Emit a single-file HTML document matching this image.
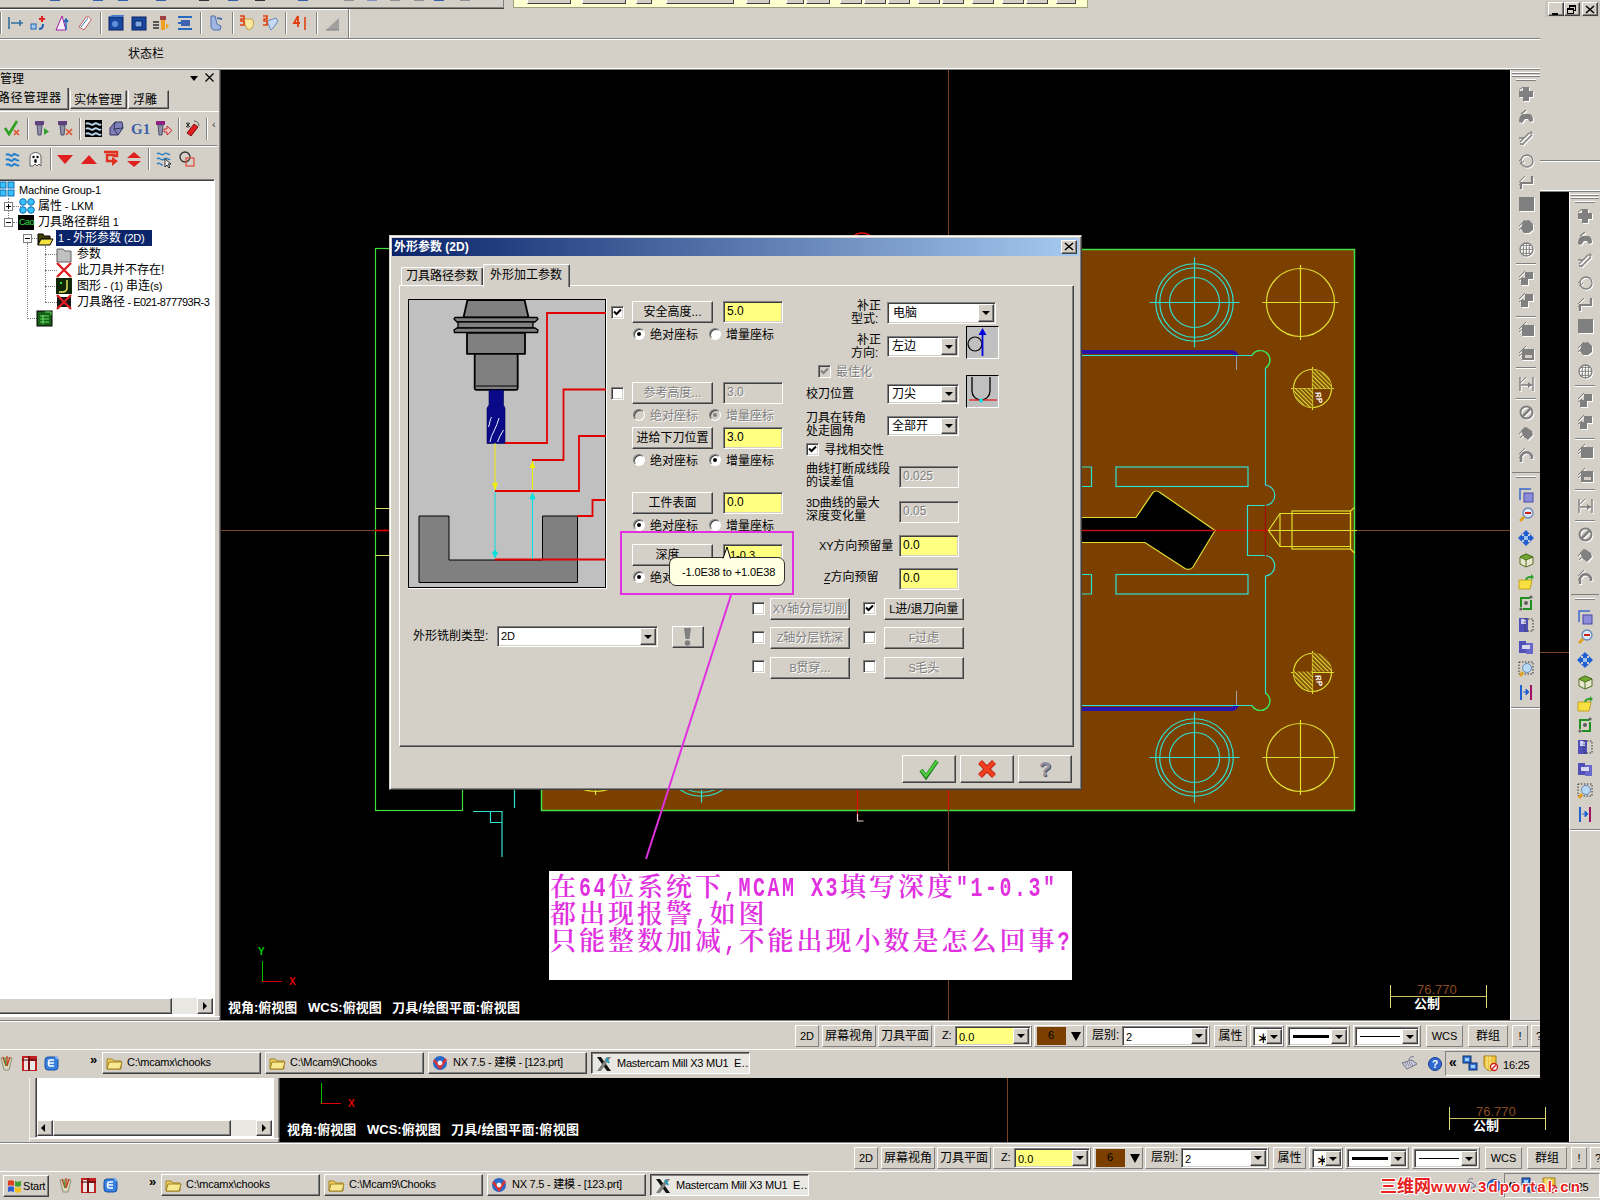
<!DOCTYPE html><html lang="zh-CN"><head><meta charset="utf-8"><title>Mastercam X3</title><style>
*{box-sizing:border-box;margin:0;padding:0}
html,body{width:1600px;height:1200px;overflow:hidden;background:#d4d0c8}
body{position:relative;font-family:"Liberation Sans","Noto Sans CJK SC",sans-serif;font-size:12px;color:#000;line-height:14px}
.a{position:absolute}
.shot{position:absolute;background:#d4d0c8}
.t{position:absolute;white-space:nowrap;font-size:12px;line-height:14px}
.lat{font-size:11px;letter-spacing:-.2px}
.l{font-size:11px;letter-spacing:-.2px}
.btn{position:absolute;background:#d4d0c8;border:1px solid;border-color:#fff #404040 #404040 #fff;box-shadow:inset -1px -1px 0 #808080,inset 1px 1px 0 #d4d0c8;text-align:center;white-space:nowrap;font-size:12px}
.btn.dis{color:#808080;text-shadow:1px 1px 0 #fff}
.sunk{position:absolute;border:1px solid;border-color:#808080 #fff #fff #808080;box-shadow:inset 1px 1px 0 #404040,inset -1px -1px 0 #d4d0c8;background:#fff;white-space:nowrap;font-size:11px;padding:3px 0 0 3px;line-height:13px}
.sunk.y{background:#ffff80}
.sunk.dis{background:#d4d0c8;color:#808080;text-shadow:1px 1px 0 #fff}
.flat{position:absolute;border:1px solid;border-color:#fff #808080 #808080 #fff;text-align:center;white-space:nowrap;font-size:12px;line-height:20px}
.cb{position:absolute;width:13px;height:13px;background:#fff;border:1px solid;border-color:#808080 #fff #fff #808080;box-shadow:inset 1px 1px 0 #404040,inset -1px -1px 0 #d4d0c8}
.rd{position:absolute;width:12px;height:12px;border-radius:50%;background:#fff;border:1px solid;border-color:#808080 #fff #fff #808080;box-shadow:inset 1px 1px 0 #404040}
.rd.on::after{content:"";position:absolute;left:3px;top:3px;width:4px;height:4px;border-radius:50%;background:#000}
.rd.gr{background:#d4d0c8}
.rd.gr.on::after{background:#808080}
.dd{position:absolute;width:16px;background:#d4d0c8;border:1px solid;border-color:#fff #404040 #404040 #fff;box-shadow:inset -1px -1px 0 #808080}
.dd::after{content:"";position:absolute;left:3px;top:50%;margin-top:-2px;border:4px solid transparent;border-top:4px solid #000;border-bottom:0}
.hl{position:absolute;height:1px}
.vl{position:absolute;width:1px}
.dis{color:#808080;text-shadow:1px 1px 0 #fff}
.tb{position:absolute;background:#d4d0c8;border:1px solid;border-color:#fff #404040 #404040 #fff;box-shadow:inset -1px -1px 0 #808080;white-space:nowrap;font-size:11px;letter-spacing:-.25px;line-height:19px;padding-left:24px;overflow:hidden}
.vw{color:#fff;font-weight:bold;font-size:13px;letter-spacing:0}
svg{position:absolute;overflow:visible}
.kl{display:inline-block;font-family:'Liberation Mono',monospace;font-weight:bold;font-size:20px;letter-spacing:2.5px;transform:scaleY(1.35);transform-origin:0 72%}
</style></head><body><div class="shot" style="left:59px;top:122px;width:1541px;height:1078px"><div class="a" style="left:1486px;top:-121px;width:60px;height:16px;background:#c8c4bc;"></div><div class="btn " style="left:1489px;top:-120px;width:16px;height:14px;line-height:12px;"></div><div class="a" style="left:1493px;top:-109px;width:6px;height:2px;background:#000;"></div><div class="btn " style="left:1505px;top:-120px;width:16px;height:14px;line-height:12px;"></div><div class="a" style="left:1510px;top:-117px;width:7px;height:6px;border:1px solid #000;border-top-width:2px"></div><div class="a" style="left:1508px;top:-114px;width:7px;height:6px;border:1px solid #000;border-top-width:2px;background:#d4d0c8"></div><div class="btn " style="left:1523px;top:-120px;width:16px;height:14px;line-height:12px;"></div><svg style="left:1527px;top:-116px" width="8" height="8" viewBox="0 0 8 8"><path d="M0 0 L8 7 M8 0 L0 7" stroke="#000" stroke-width="1.6"/></svg><div class="hl" style="left:-60px;top:38px;width:1700px;background:#808080"></div><div class="hl" style="left:-60px;top:39px;width:1700px;background:#fff"></div><div class="hl" style="left:-60px;top:68px;width:1700px;background:#fff"></div><div class="hl" style="left:-60px;top:69px;width:1700px;background:#808080"></div><div class="a" style="left:221px;top:70px;width:1289px;height:950px;background:#000;"></div><div class="hl" style="left:221px;top:530px;width:1289px;background:#7a4524"></div><div class="vl" style="left:948px;top:70px;height:950px;background:#7a4524"></div><div class="vl" style="left:262px;top:961px;height:21px;background:#00c000"></div><div class="hl" style="left:262px;top:981px;width:20px;background:#e00000"></div><div class="t" style="left:258px;top:945px;color:#00d000;font-size:10px;font-weight:bold">Y</div><div class="t" style="left:289px;top:975px;color:#e00000;font-size:10px;font-weight:bold">X</div><div class="t vw" style="left:228px;top:1001px;">视角:俯视图</div><div class="t vw" style="left:308px;top:1001px;">WCS:俯视图</div><div class="t vw" style="left:392px;top:1001px;letter-spacing:.3px">刀具/绘图平面:俯视图</div><div class="t" style="left:1417px;top:983px;color:#8a4a20;font-size:13px">76.770</div><div class="hl" style="left:1390px;top:996px;width:96px;background:#c8c060"></div><div class="vl" style="left:1390px;top:985px;height:23px;background:#e0e080"></div><div class="vl" style="left:1486px;top:985px;height:23px;background:#e0e080"></div><div class="t vw" style="left:1414px;top:997px;">公制</div><div class="a" style="left:-30px;top:70px;width:251px;height:951px;background:#d4d0c8;"></div><div class="vl" style="left:-30px;top:70px;height:951px;background:#f4f2ee"></div><div class="vl" style="left:219px;top:70px;height:951px;background:#808080"></div><div class="vl" style="left:220px;top:70px;height:951px;background:#404040"></div><div class="a" style="left:-24px;top:179px;width:239px;height:837px;background:#fff;border:1px solid;border-color:#808080 #fff #fff #808080;box-shadow:inset 1px 1px 0 #404040"></div><div class="a" style="left:-22px;top:998px;width:235px;height:16px;background:#e9e7e2;"></div><div class="btn " style="left:-22px;top:998px;width:16px;height:16px;line-height:14px;"></div><div class="a" style="left:-18px;top:1002px;border:4px solid transparent;border-right:4px solid #000;border-left:0"></div><div class="btn " style="left:-6px;top:998px;width:178px;height:16px;line-height:14px;"></div><div class="btn " style="left:197px;top:998px;width:16px;height:16px;line-height:14px;"></div><div class="a" style="left:203px;top:1002px;border:4px solid transparent;border-left:4px solid #000;border-right:0"></div><div class="hl" style="left:-30px;top:1016px;width:250px;background:#fff"></div><div class="a" style="left:1510px;top:70px;width:31px;height:951px;background:#d4d0c8;"></div><div class="vl" style="left:1510px;top:70px;height:951px;background:#fff"></div><div class="hl" style="left:1512px;top:72px;width:28px;background:#fff"></div><div class="hl" style="left:1512px;top:73px;width:28px;background:#808080"></div><div class="hl" style="left:1512px;top:75px;width:28px;background:#fff"></div><div class="hl" style="left:1512px;top:76px;width:28px;background:#808080"></div><div class="hl" style="left:1516px;top:79px;width:20px;background:#fff"></div><div class="hl" style="left:1516px;top:80px;width:20px;background:#808080"></div><div class="hl" style="left:1516px;top:263px;width:20px;background:#808080"></div><div class="hl" style="left:1516px;top:264px;width:20px;background:#fff"></div><div class="hl" style="left:1516px;top:316px;width:20px;background:#808080"></div><div class="hl" style="left:1516px;top:317px;width:20px;background:#fff"></div><div class="hl" style="left:1516px;top:367px;width:20px;background:#808080"></div><div class="hl" style="left:1516px;top:368px;width:20px;background:#fff"></div><div class="hl" style="left:1516px;top:398px;width:20px;background:#808080"></div><div class="hl" style="left:1516px;top:399px;width:20px;background:#fff"></div><svg style="left:1518px;top:86px" width="17" height="17" viewBox="0 0 17 17"><g style="filter:drop-shadow(1px 1px 0 #fff)"><path d="M5 1h6v4h4v6h-4v4H5v-4H1V5h4z" fill="#808080"/><path d="M1 4l4-3" stroke="#808080"/></g></svg><svg style="left:1518px;top:109px" width="17" height="17" viewBox="0 0 17 17"><g style="filter:drop-shadow(1px 1px 0 #fff)"><path d="M1 13c0-5 2-8 5-8h5c3 0 4 3 4 7l-3 1-2-3H7l-3 4z" fill="#808080"/><path d="M3 5l5-4" stroke="#808080" stroke-width="1.5"/></g></svg><svg style="left:1518px;top:130px" width="17" height="17" viewBox="0 0 17 17"><g style="filter:drop-shadow(1px 1px 0 #fff)"><path d="M2 12L11 3M4 15L14 5M1 8h5M2 14h4" stroke="#808080" stroke-width="1.3" fill="none"/><path d="M13 1v4M11 3h4" stroke="#808080"/></g></svg><svg style="left:1518px;top:152px" width="17" height="17" viewBox="0 0 17 17"><g style="filter:drop-shadow(1px 1px 0 #fff)"><circle cx="9" cy="9" r="6" fill="none" stroke="#808080" stroke-width="1.3"/><path d="M1 9l6-6M2 12l4-3" stroke="#808080"/></g></svg><svg style="left:1518px;top:174px" width="17" height="17" viewBox="0 0 17 17"><g style="filter:drop-shadow(1px 1px 0 #fff)"><path d="M3 15V9h11V2" fill="none" stroke="#808080" stroke-width="2.2"/><path d="M1 8l6-6M1 11l4-3" stroke="#808080"/></g></svg><svg style="left:1518px;top:196px" width="17" height="17" viewBox="0 0 17 17"><g style="filter:drop-shadow(1px 1px 0 #fff)"><rect x="1" y="1" width="15" height="14" fill="#808080"/></g></svg><svg style="left:1518px;top:218px" width="17" height="17" viewBox="0 0 17 17"><g style="filter:drop-shadow(1px 1px 0 #fff)"><path d="M5 3l6-1 4 4v6l-4 3H6l-3-4z" fill="#808080"/><path d="M1 8l6-6M1 12l4-4" stroke="#808080"/></g></svg><svg style="left:1518px;top:241px" width="17" height="17" viewBox="0 0 17 17"><g style="filter:drop-shadow(1px 1px 0 #fff)"><circle cx="8.5" cy="8.5" r="6.5" fill="none" stroke="#808080" stroke-width="1.3"/><path d="M2 8.5h13M8.5 2v13M4 4.5h9M4 12.5h9M5.5 3v11M11.5 3v11" stroke="#808080" stroke-width=".8"/></g></svg><svg style="left:1518px;top:270px" width="17" height="17" viewBox="0 0 17 17"><g style="filter:drop-shadow(1px 1px 0 #fff)"><rect x="7" y="2" width="8" height="7" fill="#808080"/><rect x="3" y="8" width="7" height="7" fill="#808080"/><path d="M1 7l6-6M1 10l4-3" stroke="#808080"/></g></svg><svg style="left:1518px;top:292px" width="17" height="17" viewBox="0 0 17 17"><g style="filter:drop-shadow(1px 1px 0 #fff)"><rect x="7" y="2" width="8" height="7" fill="#808080"/><rect x="3" y="8" width="7" height="7" fill="#808080"/><path d="M1 7l6-6M1 10l4-3" stroke="#808080"/></g></svg><svg style="left:1518px;top:321px" width="17" height="17" viewBox="0 0 17 17"><g style="filter:drop-shadow(1px 1px 0 #fff)"><rect x="4" y="4" width="12" height="11" fill="#808080"/><path d="M1 8l7-7M1 11l3-3" stroke="#808080"/></g></svg><svg style="left:1518px;top:345px" width="17" height="17" viewBox="0 0 17 17"><g style="filter:drop-shadow(1px 1px 0 #fff)"><rect x="4" y="4" width="12" height="11" fill="#808080"/><rect x="7" y="10" width="7" height="3" fill="#d4d0c8"/><path d="M1 8l7-7M1 11l3-3" stroke="#808080"/></g></svg><svg style="left:1518px;top:375px" width="17" height="17" viewBox="0 0 17 17"><g style="filter:drop-shadow(1px 1px 0 #fff)"><path d="M2 2v14M15 2v14M3 10h11" stroke="#808080" stroke-width="1.4"/><path d="M10 7l4 3-4 3z" fill="#808080"/><path d="M2 8l6-6" stroke="#808080"/></g></svg><svg style="left:1518px;top:404px" width="17" height="17" viewBox="0 0 17 17"><g style="filter:drop-shadow(1px 1px 0 #fff)"><circle cx="8.5" cy="8.5" r="6" fill="none" stroke="#808080" stroke-width="2"/><path d="M4 13L13 4" stroke="#808080" stroke-width="2.5"/></g></svg><svg style="left:1518px;top:425px" width="17" height="17" viewBox="0 0 17 17"><g style="filter:drop-shadow(1px 1px 0 #fff)"><path d="M3 6l5-4 6 4 1 4-5 5-4-3z" fill="#808080"/><path d="M1 9l6-7M2 13l4-4" stroke="#808080"/></g></svg><svg style="left:1518px;top:447px" width="17" height="17" viewBox="0 0 17 17"><g style="filter:drop-shadow(1px 1px 0 #fff)"><path d="M3 15V9c3-5 8-5 11 0v3" fill="none" stroke="#808080" stroke-width="2.5"/><path d="M1 7l6-6M1 11l4-4" stroke="#808080"/></g></svg><div class="hl" style="left:1512px;top:472px;width:28px;background:#808080"></div><div class="hl" style="left:1516px;top:476px;width:20px;background:#fff"></div><div class="hl" style="left:1516px;top:477px;width:20px;background:#808080"></div><svg style="left:1518px;top:487px" width="17" height="17" viewBox="0 0 17 17"><rect x="6" y="6" width="9" height="9" fill="#8c8cd8" stroke="#4848a8"/><path d="M2 13V2h11" fill="none" stroke="#3868c8" stroke-width="1.5"/></svg><svg style="left:1518px;top:507px" width="17" height="17" viewBox="0 0 17 17"><circle cx="10" cy="6" r="5" fill="#d8e8f8" stroke="#6888b8" stroke-width="1.3"/><rect x="7" y="5" width="6" height="2" fill="#d02020"/><path d="M6 10l-4 4" stroke="#e0a020" stroke-width="3"/></svg><svg style="left:1518px;top:530px" width="17" height="17" viewBox="0 0 17 17"><path d="M8 0l4 4H10v2h2V4l4 4-4 4v-2h-2v2h2l-4 4-4-4h2v-2H4v2L0 8l4-4v2h2V4H4z" fill="#2060d0"/><rect x="6" y="6" width="4" height="4" fill="#a0c0f0"/></svg><svg style="left:1518px;top:552px" width="17" height="17" viewBox="0 0 17 17"><path d="M2 5l6-3 7 3v7l-7 3-6-3z" fill="#e8e8d0" stroke="#507020"/><path d="M2 5l6-3 7 3-7 3z" fill="#70a830" stroke="#507020"/><path d="M8 8v7" stroke="#507020"/></svg><svg style="left:1518px;top:574px" width="17" height="17" viewBox="0 0 17 17"><path d="M1 6h13l-2 9H1z" fill="#f8e040" stroke="#c0a020"/><path d="M7 6c1-4 4-4 6-4V0l3 3-3 3V4c-2 0-3 0-4 2z" fill="#30a030"/></svg><svg style="left:1518px;top:595px" width="17" height="17" viewBox="0 0 17 17"><path d="M3 12V3h9M13 5v9H5" fill="none" stroke="#209020" stroke-width="2"/><circle cx="8" cy="8" r="2" fill="#606060"/><circle cx="13" cy="2" r="1.6" fill="#606060"/><circle cx="3" cy="14" r="1.6" fill="#606060"/></svg><svg style="left:1518px;top:617px" width="17" height="17" viewBox="0 0 17 17"><path d="M1 1h9v14H1z" fill="#5050b8"/><rect x="3" y="2" width="5" height="5" fill="#d0d0f0"/><rect x="7" y="2" width="8" height="12" fill="none" stroke="#303030" stroke-dasharray="1.5 1.5"/></svg><svg style="left:1518px;top:639px" width="17" height="17" viewBox="0 0 17 17"><path d="M1 2h7v12H1z" fill="#5050b8"/><path d="M8 4h7v11H8z" fill="#6868c8"/><rect x="4" y="6" width="8" height="4" fill="#d8d8f0"/></svg><svg style="left:1518px;top:661px" width="17" height="17" viewBox="0 0 17 17"><rect x="1" y="1" width="14" height="12" fill="none" stroke="#303030" stroke-dasharray="1.5 1.5"/><circle cx="9" cy="7" r="4.5" fill="#b8d8f8" stroke="#6888b8"/><path d="M5 11l-3 4" stroke="#e0a020" stroke-width="3"/></svg><svg style="left:1518px;top:684px" width="17" height="17" viewBox="0 0 17 17"><path d="M3 1v15" stroke="#2060d0" stroke-width="2"/><path d="M13 1v15" stroke="#a01060" stroke-width="2"/><path d="M5 8h4M8 5l3 3-3 3z" stroke="#2060d0" fill="#2060d0"/></svg><div class="hl" style="left:1511px;top:707px;width:30px;background:#808080"></div><div class="hl" style="left:1511px;top:708px;width:30px;background:#fff"></div><div class="hl" style="left:-60px;top:1020px;width:1700px;background:#808080"></div><div class="hl" style="left:-60px;top:1021px;width:1700px;background:#fff"></div><div class="flat" style="left:795px;top:1025px;width:24px;height:22px;font-size:11px">2D</div><div class="flat" style="left:822px;top:1025px;width:54px;height:22px;">屏幕视角</div><div class="flat" style="left:878px;top:1025px;width:54px;height:22px;">刀具平面</div><div class="flat" style="left:934px;top:1025px;width:98px;height:22px;"></div><div class="t lat" style="left:942px;top:1028px;">Z:</div><div class="sunk y" style="left:955px;top:1026px;width:76px;height:20px;font-size:11px;padding-top:4px">0.0</div><div class="dd" style="left:1013px;top:1028px;height:16px"></div><div class="flat" style="left:1034px;top:1025px;width:50px;height:22px;"></div><div class="a" style="left:1037px;top:1027px;width:29px;height:18px;background:#7b3f00;text-align:center;font-size:11px;line-height:16px"></div><div class="t lat" style="left:1048px;top:1028px;">6</div><div class="a" style="left:1071px;top:1032px;border:5px solid transparent;border-top:9px solid #000;border-bottom:0"></div><div class="flat" style="left:1086px;top:1025px;width:124px;height:22px;"></div><div class="t" style="left:1092px;top:1028px;">层别:</div><div class="sunk " style="left:1122px;top:1026px;width:87px;height:20px;font-size:11px;padding-top:4px">2</div><div class="dd" style="left:1191px;top:1028px;height:16px"></div><div class="flat" style="left:1214px;top:1025px;width:33px;height:22px;">属性</div><div class="flat" style="left:1250px;top:1025px;width:34px;height:22px;"></div><div class="sunk " style="left:1253px;top:1027px;width:30px;height:19px;"></div><div class="t" style="left:1257px;top:1031px;font-size:15px">∗</div><div class="dd" style="left:1266px;top:1029px;height:15px"></div><div class="flat" style="left:1286px;top:1025px;width:64px;height:22px;"></div><div class="sunk " style="left:1288px;top:1027px;width:60px;height:19px;"></div><div class="a" style="left:1293px;top:1035px;width:36px;height:3px;background:#000;"></div><div class="dd" style="left:1331px;top:1029px;height:15px"></div><div class="flat" style="left:1353px;top:1025px;width:68px;height:22px;"></div><div class="sunk " style="left:1355px;top:1027px;width:64px;height:19px;"></div><div class="a" style="left:1360px;top:1036px;width:40px;height:1px;background:#000;"></div><div class="dd" style="left:1402px;top:1029px;height:15px"></div><div class="flat" style="left:1426px;top:1025px;width:37px;height:22px;font-size:11px">WCS</div><div class="flat" style="left:1468px;top:1025px;width:40px;height:22px;">群组</div><div class="flat" style="left:1512px;top:1025px;width:16px;height:22px;font-size:11px">!</div><div class="flat" style="left:1531px;top:1025px;width:16px;height:22px;font-size:11px">?</div><div class="hl" style="left:-60px;top:1049px;width:1700px;background:#fff"></div><div class="btn " style="left:-56px;top:1053px;width:46px;height:22px;line-height:20px;"></div><svg style="left:-52px;top:1056px" width="16" height="16" viewBox="0 0 16 16"><path d="M1 3c2-1 4-1 6 0v5c-2-1-4-1-6 0z" fill="#e04020"/><path d="M8 3c2 1 4 1 6 0v5c-2 1-4 1-6 0z" fill="#40a030"/><path d="M1 9c2-1 4-1 6 0v5c-2-1-4-1-6 0z" fill="#3060d0"/><path d="M8 9c2 1 4 1 6 0v5c-2 1-4 1-6 0z" fill="#f0c020"/></svg><div class="t" style="left:-36px;top:1057px;font-size:11px;letter-spacing:-.2px">Start</div><svg style="left:-2px;top:1055px" width="16" height="16" viewBox="0 0 16 16"><path d="M3 3l3 12h5l3-12z" fill="#d8d8c0" stroke="#909070"/><path d="M5 2l3 9M9 1l0 10M12 2l-3 9" stroke="#c04020" stroke-width="1.3"/><path d="M7 3l1 8" stroke="#30a030"/></svg><svg style="left:21px;top:1055px" width="16" height="16" viewBox="0 0 16 16"><rect x="1" y="1" width="15" height="15" fill="#c02020"/><rect x="3" y="3" width="4" height="12" fill="#f0e0e0"/><rect x="9" y="6" width="5" height="9" fill="#e8e8e8"/><path d="M1 5h15" stroke="#400000"/><path d="M8 1v15" stroke="#400000"/></svg><svg style="left:43px;top:1055px" width="16" height="16" viewBox="0 0 16 16"><rect x="2" y="2" width="13" height="13" rx="3" fill="#3880e0" stroke="#1850a0"/><path d="M11 5H7C5 5 5 11 7 11h4M6 8h5" stroke="#fff" stroke-width="1.6" fill="none"/><path d="M12 1l3 3" stroke="#80b0f0" stroke-width="2"/></svg><div class="t" style="left:90px;top:1053px;font-size:13px;font-weight:bold">»</div><div class="tb" style="left:102px;top:1052px;width:159px;height:22px">C:\mcamx\chooks</div><svg style="left:106px;top:1055px" width="16" height="16" viewBox="0 0 16 16"><path d="M1 4h5l2 2h7v8H1z" fill="#f0d060" stroke="#a08020"/><path d="M1 14l2-7h13l-2 7z" fill="#f8e890" stroke="#a08020"/></svg><div class="tb" style="left:265px;top:1052px;width:159px;height:22px">C:\Mcam9\Chooks</div><svg style="left:269px;top:1055px" width="16" height="16" viewBox="0 0 16 16"><path d="M1 4h5l2 2h7v8H1z" fill="#f0d060" stroke="#a08020"/><path d="M1 14l2-7h13l-2 7z" fill="#f8e890" stroke="#a08020"/></svg><div class="tb" style="left:428px;top:1052px;width:159px;height:22px">NX 7.5 - 建模 - [123.prt]</div><svg style="left:432px;top:1055px" width="16" height="16" viewBox="0 0 16 16"><circle cx="8" cy="8" r="7" fill="#2868c8"/><path d="M2 5l6 8 6-9" stroke="#e03030" stroke-width="2.4" fill="none"/><circle cx="8" cy="8" r="2.4" fill="#f0f0f8"/></svg><div class="tb" style="left:591px;top:1052px;width:159px;height:22px;border-color:#404040 #fff #fff #404040;box-shadow:inset 1px 1px 0 #808080;background:#e9e7e2;padding-left:25px;line-height:21px">Mastercam Mill X3 MU1&nbsp; E…</div><svg style="left:596px;top:1056px" width="16" height="16" viewBox="0 0 16 16"><path d="M1 1h4l10 14h-4z" fill="#101010"/><path d="M15 1h-4L1 15h4z" fill="#808080"/><path d="M10 2l3 5" stroke="#20a0c0" stroke-width="2"/></svg><svg style="left:1401px;top:1055px" width="16" height="16" viewBox="0 0 16 16"><path d="M1 8l10-3 5 4-10 5z" fill="#c8c8d8" stroke="#707088"/><path d="M4 8l8 0M5 10l8 0" stroke="#707088" stroke-dasharray="1 1"/><path d="M8 5c0-3 3-4 5-3" stroke="#707088" fill="none"/></svg><svg style="left:1427px;top:1056px" width="16" height="16" viewBox="0 0 16 16"><circle cx="8" cy="8" r="6.5" fill="#3068d0" stroke="#18408c"/><text x="8" y="12" font-size="10" font-weight="bold" fill="#fff" text-anchor="middle" font-family="Liberation Sans,sans-serif">?</text></svg><div class="a" style="left:1445px;top:1051px;width:96px;height:25px;border:1px solid;border-color:#808080 #fff #fff #808080"></div><div class="t" style="left:1449px;top:1055px;font-size:14px;font-weight:bold">«</div><svg style="left:1462px;top:1055px" width="16" height="16" viewBox="0 0 16 16"><rect x="1" y="1" width="8" height="7" fill="#3070d0" stroke="#103070"/><rect x="3" y="3" width="4" height="3" fill="#a0d0f8"/><rect x="7" y="8" width="8" height="7" fill="#3070d0" stroke="#103070"/><rect x="9" y="10" width="4" height="3" fill="#a0d0f8"/></svg><svg style="left:1482px;top:1055px" width="16" height="16" viewBox="0 0 16 16"><path d="M2 1h12v8c0 4-3 6-6 7-3-1-6-3-6-7z" fill="#f0c840" stroke="#a07818"/><path d="M5 1v13M8 1v15" stroke="#f8e8a0"/><circle cx="12" cy="12" r="3.5" fill="#fff" stroke="#d02020" stroke-width="1.4"/><path d="M9.8 14.2l4.4-4.4" stroke="#d02020" stroke-width="1.4"/></svg><div class="t lat" style="left:1503px;top:1058px;">16:25</div></div><div class="shot" style="left:0;top:0;width:1540px;height:1078px;overflow:hidden"><div class="hl" style="left:-60px;top:38px;width:1700px;background:#808080"></div><div class="hl" style="left:-60px;top:39px;width:1700px;background:#fff"></div><div class="hl" style="left:-60px;top:68px;width:1700px;background:#fff"></div><div class="hl" style="left:-60px;top:69px;width:1700px;background:#808080"></div><div class="a" style="left:50px;top:0px;width:10px;height:1px;background:#3060b0;"></div><div class="a" style="left:93px;top:0px;width:10px;height:1px;background:#3060b0;"></div><div class="a" style="left:118px;top:0px;width:10px;height:1px;background:#3060b0;"></div><div class="a" style="left:156px;top:0px;width:10px;height:1px;background:#3060b0;"></div><div class="a" style="left:199px;top:0px;width:10px;height:1px;background:#303030;"></div><div class="a" style="left:228px;top:0px;width:10px;height:1px;background:#3060b0;"></div><div class="a" style="left:255px;top:0px;width:10px;height:1px;background:#303030;"></div><div class="a" style="left:298px;top:0px;width:10px;height:1px;background:#3060b0;"></div><div class="a" style="left:344px;top:0px;width:10px;height:1px;background:#909090;"></div><div class="a" style="left:367px;top:0px;width:10px;height:1px;background:#8090c0;"></div><div class="a" style="left:390px;top:0px;width:10px;height:1px;background:#909090;"></div><div class="a" style="left:414px;top:0px;width:10px;height:1px;background:#909090;"></div><div class="a" style="left:434px;top:0px;width:10px;height:1px;background:#3060b0;"></div><div class="a" style="left:460px;top:0px;width:10px;height:1px;background:#909090;"></div><div class="hl" style="left:0px;top:7px;width:504px;background:#808080"></div><div class="hl" style="left:0px;top:8px;width:504px;background:#404040"></div><div class="hl" style="left:0px;top:9px;width:349px;background:#fff"></div><div class="vl" style="left:503px;top:0px;height:8px;background:#808080"></div><div class="vl" style="left:348px;top:9px;height:29px;background:#808080"></div><div class="vl" style="left:349px;top:9px;height:29px;background:#fff"></div><div class="a" style="left:513px;top:-4px;width:575px;height:12px;background:#ffffd0;border:1px solid #a0a080"></div><div class="a" style="left:527px;top:-4px;width:44px;height:8px;background:#d4d0c8;border:1px solid;border-color:#fff #404040 #404040 #fff"></div><div class="a" style="left:582px;top:-4px;width:44px;height:8px;background:#d4d0c8;border:1px solid;border-color:#fff #404040 #404040 #fff"></div><div class="a" style="left:636px;top:-4px;width:16px;height:8px;background:#d4d0c8;border:1px solid;border-color:#fff #404040 #404040 #fff"></div><div class="a" style="left:666px;top:-4px;width:68px;height:8px;background:#d4d0c8;border:1px solid;border-color:#fff #404040 #404040 #fff"></div><div class="a" style="left:746px;top:-4px;width:24px;height:8px;background:#d4d0c8;border:1px solid;border-color:#fff #404040 #404040 #fff"></div><div class="a" style="left:786px;top:-4px;width:18px;height:8px;background:#d4d0c8;border:1px solid;border-color:#fff #404040 #404040 #fff"></div><div class="a" style="left:806px;top:-4px;width:24px;height:8px;background:#d4d0c8;border:1px solid;border-color:#fff #404040 #404040 #fff"></div><div class="a" style="left:840px;top:-4px;width:22px;height:8px;background:#d4d0c8;border:1px solid;border-color:#fff #404040 #404040 #fff"></div><div class="a" style="left:864px;top:-4px;width:22px;height:8px;background:#d4d0c8;border:1px solid;border-color:#fff #404040 #404040 #fff"></div><div class="a" style="left:888px;top:-4px;width:22px;height:8px;background:#d4d0c8;border:1px solid;border-color:#fff #404040 #404040 #fff"></div><div class="a" style="left:918px;top:-4px;width:22px;height:8px;background:#d4d0c8;border:1px solid;border-color:#fff #404040 #404040 #fff"></div><div class="a" style="left:942px;top:-4px;width:22px;height:8px;background:#d4d0c8;border:1px solid;border-color:#fff #404040 #404040 #fff"></div><div class="a" style="left:972px;top:-4px;width:22px;height:8px;background:#d4d0c8;border:1px solid;border-color:#fff #404040 #404040 #fff"></div><div class="a" style="left:1002px;top:-4px;width:22px;height:8px;background:#d4d0c8;border:1px solid;border-color:#fff #404040 #404040 #fff"></div><div class="a" style="left:1026px;top:-4px;width:22px;height:8px;background:#d4d0c8;border:1px solid;border-color:#fff #404040 #404040 #fff"></div><div class="a" style="left:1056px;top:-4px;width:20px;height:8px;background:#d4d0c8;border:1px solid;border-color:#fff #404040 #404040 #fff"></div><div class="vl" style="left:0px;top:12px;height:22px;background:#808080"></div><div class="vl" style="left:1px;top:12px;height:22px;background:#fff"></div><div class="vl" style="left:100px;top:12px;height:22px;background:#808080"></div><div class="vl" style="left:101px;top:12px;height:22px;background:#fff"></div><div class="vl" style="left:200px;top:12px;height:22px;background:#808080"></div><div class="vl" style="left:201px;top:12px;height:22px;background:#fff"></div><div class="vl" style="left:232px;top:12px;height:22px;background:#808080"></div><div class="vl" style="left:233px;top:12px;height:22px;background:#fff"></div><div class="vl" style="left:285px;top:12px;height:22px;background:#808080"></div><div class="vl" style="left:286px;top:12px;height:22px;background:#fff"></div><div class="vl" style="left:316px;top:12px;height:22px;background:#808080"></div><div class="vl" style="left:317px;top:12px;height:22px;background:#fff"></div><svg style="left:8px;top:15px" width="16" height="16" viewBox="0 0 16 16"><path d="M1 2v12M3 8h6M12 5v6M9 8h6" stroke="#3070a0" stroke-width="1.6"/></svg><svg style="left:30px;top:15px" width="16" height="16" viewBox="0 0 16 16"><rect x="1" y="9" width="5" height="5" fill="#a0c8f0" stroke="#2060b0"/><path d="M9 14c3 0 4-2 4-5" stroke="#2060b0" stroke-width="2" fill="none"/><path d="M12 1v6M9 4h6" stroke="#e02020" stroke-width="2"/></svg><svg style="left:54px;top:15px" width="16" height="16" viewBox="0 0 16 16"><path d="M2 15L8 1l4 14z" fill="#f8f0f8" stroke="#a020a0"/><path d="M12 15V5M10 7l2-3 2 3" stroke="#2060c0" stroke-width="1.4" fill="none"/></svg><svg style="left:77px;top:15px" width="16" height="16" viewBox="0 0 16 16"><path d="M2 12L9 2c3-1 5 1 5 3L7 15z" fill="#f8f8f8" stroke="#c06060"/><path d="M4 12l7-9" stroke="#4080c0"/></svg><svg style="left:108px;top:15px" width="16" height="16" viewBox="0 0 16 16"><rect x="1" y="2" width="14" height="13" fill="#1848a0" stroke="#082060"/><circle cx="7" cy="9" r="3" fill="#6090d8"/><path d="M1 2l3-2h12l-1 2" fill="#4878c8"/></svg><svg style="left:131px;top:15px" width="16" height="16" viewBox="0 0 16 16"><rect x="1" y="2" width="14" height="13" fill="#1848a0" stroke="#082060"/><rect x="4" y="6" width="7" height="6" fill="#80a8e0" stroke="#082060"/></svg><svg style="left:153px;top:15px" width="16" height="16" viewBox="0 0 16 16"><path d="M0 7h6M0 10h6M0 13h6" stroke="#303030" stroke-width="1.4"/><rect x="7" y="1" width="6" height="4" fill="#a04040"/><rect x="8" y="5" width="4" height="10" fill="#f0a020"/><path d="M13 8l3 3-3 3z" fill="#f0a020"/></svg><svg style="left:177px;top:15px" width="16" height="16" viewBox="0 0 16 16"><path d="M1 2h14M1 14h14" stroke="#2868c0" stroke-width="2"/><rect x="4" y="5" width="9" height="6" fill="#4060b0"/><path d="M1 8h4" stroke="#2868c0" stroke-width="2"/></svg><svg style="left:208px;top:15px" width="16" height="16" viewBox="0 0 16 16"><path d="M3 1h4l2 8 4 2-1 4H5l-2-3z" fill="#a0b8e0" stroke="#5070b0"/><path d="M9 3l5 1" stroke="#5070b0" stroke-width="2"/></svg><svg style="left:239px;top:15px" width="16" height="16" viewBox="0 0 16 16"><path d="M5 4h8c2 2 2 6 0 9l-4 2-3-5z" fill="#f8e8a0" stroke="#c0a040"/><path d="M1 1h4v3H2v2h3v4H1" stroke="#e04010" stroke-width="1.6" fill="none"/></svg><svg style="left:262px;top:15px" width="16" height="16" viewBox="0 0 16 16"><path d="M5 6l9-3 2 3-4 6-3 3-2-4z" fill="#c8d8f0" stroke="#6088c0"/><path d="M1 1h4v3H2v2h3v4H1" stroke="#e04010" stroke-width="1.6" fill="none"/></svg><svg style="left:293px;top:15px" width="16" height="16" viewBox="0 0 16 16"><path d="M5 1L1 8h6M5 1v11" stroke="#e04010" stroke-width="1.8" fill="none"/><path d="M12 2v13" stroke="#e04010" stroke-width="1.6"/></svg><svg style="left:324px;top:15px" width="16" height="16" viewBox="0 0 16 16"><path d="M2 15L15 3v12z" fill="#a0a0a0"/><path d="M2 15h13" stroke="#808080"/></svg><div class="t" style="left:128px;top:47px;">状态栏</div><div class="a" style="left:221px;top:70px;width:1289px;height:950px;background:#000;"></div><div class="hl" style="left:221px;top:530px;width:1289px;background:#7a4524"></div><div class="vl" style="left:948px;top:70px;height:950px;background:#7a4524"></div><div class="vl" style="left:262px;top:961px;height:21px;background:#00c000"></div><div class="hl" style="left:262px;top:981px;width:20px;background:#e00000"></div><div class="t" style="left:258px;top:945px;color:#00d000;font-size:10px;font-weight:bold">Y</div><div class="t" style="left:289px;top:975px;color:#e00000;font-size:10px;font-weight:bold">X</div><div class="t vw" style="left:228px;top:1001px;">视角:俯视图</div><div class="t vw" style="left:308px;top:1001px;">WCS:俯视图</div><div class="t vw" style="left:392px;top:1001px;letter-spacing:.3px">刀具/绘图平面:俯视图</div><div class="t" style="left:1417px;top:983px;color:#8a4a20;font-size:13px">76.770</div><div class="hl" style="left:1390px;top:996px;width:96px;background:#c8c060"></div><div class="vl" style="left:1390px;top:985px;height:23px;background:#e0e080"></div><div class="vl" style="left:1486px;top:985px;height:23px;background:#e0e080"></div><div class="t vw" style="left:1414px;top:997px;">公制</div><div class="a" style="left:-30px;top:70px;width:251px;height:951px;background:#d4d0c8;"></div><div class="vl" style="left:-30px;top:70px;height:951px;background:#f4f2ee"></div><div class="vl" style="left:219px;top:70px;height:951px;background:#808080"></div><div class="vl" style="left:220px;top:70px;height:951px;background:#404040"></div><div class="a" style="left:-24px;top:179px;width:239px;height:837px;background:#fff;border:1px solid;border-color:#808080 #fff #fff #808080;box-shadow:inset 1px 1px 0 #404040"></div><div class="a" style="left:-22px;top:998px;width:235px;height:16px;background:#e9e7e2;"></div><div class="btn " style="left:-22px;top:998px;width:16px;height:16px;line-height:14px;"></div><div class="a" style="left:-18px;top:1002px;border:4px solid transparent;border-right:4px solid #000;border-left:0"></div><div class="btn " style="left:-6px;top:998px;width:178px;height:16px;line-height:14px;"></div><div class="btn " style="left:197px;top:998px;width:16px;height:16px;line-height:14px;"></div><div class="a" style="left:203px;top:1002px;border:4px solid transparent;border-left:4px solid #000;border-right:0"></div><div class="hl" style="left:-30px;top:1016px;width:250px;background:#fff"></div><div class="t" style="left:0px;top:72px;">管理</div><div class="a" style="left:190px;top:76px;border:4px solid transparent;border-top:5px solid #000;border-bottom:0"></div><svg style="left:205px;top:73px" width="9" height="9" viewBox="0 0 9 9"><path d="M0.5 0.5 L8.5 8.5 M8.5 0.5 L0.5 8.5" stroke="#000" stroke-width="1.2"/></svg><div class="a" style="left:-20px;top:88px;width:89px;height:22px;border:1px solid;border-color:#fff #404040 #404040 #fff;border-top:0;box-shadow:inset -1px -1px 0 #808080"></div><div class="t" style="left:-15px;top:91px;letter-spacing:.8px">具路径管理器</div><div class="a" style="left:70px;top:90px;width:57px;height:19px;border:1px solid;border-color:transparent #404040 #404040 #fff;box-shadow:inset -1px -1px 0 #808080"></div><div class="t" style="left:74px;top:93px;">实体管理</div><div class="a" style="left:128px;top:90px;width:41px;height:19px;border:1px solid;border-color:transparent #404040 #404040 #fff;box-shadow:inset -1px -1px 0 #808080"></div><div class="t" style="left:133px;top:93px;">浮雕</div><div class="hl" style="left:0px;top:111px;width:219px;background:#fff"></div><svg style="left:4px;top:120px" width="17" height="17" viewBox="0 0 17 17"><path d="M1 8l4 6L13 1" stroke="#30a020" stroke-width="2.6" fill="none"/><path d="M10 10l5 5M15 10l-5 5" stroke="#e05030" stroke-width="1.6"/></svg><div class="vl" style="left:27px;top:118px;height:22px;background:#808080"></div><div class="vl" style="left:28px;top:118px;height:22px;background:#fff"></div><svg style="left:33px;top:120px" width="17" height="17" viewBox="0 0 17 17"><rect x="2" y="1" width="9" height="4" fill="#604080"/><path d="M4 5h5l-1 10H5z" fill="#9090a8" stroke="#505070"/><path d="M11 8l5 3.5-5 3.500z" fill="#30a030"/></svg><svg style="left:56px;top:120px" width="17" height="17" viewBox="0 0 17 17"><rect x="2" y="1" width="9" height="4" fill="#604080"/><path d="M4 5h5l-1 10H5z" fill="#9090a8" stroke="#505070"/><path d="M10 9l6 6M16 9l-6 6" stroke="#e05030" stroke-width="1.6"/></svg><div class="vl" style="left:79px;top:118px;height:22px;background:#808080"></div><div class="vl" style="left:80px;top:118px;height:22px;background:#fff"></div><svg style="left:85px;top:120px" width="17" height="17" viewBox="0 0 17 17"><rect x="0" y="0" width="17" height="17" fill="#000"/><path d="M1 4c3-3 5 3 8 0s5 3 7 0M1 9c3-3 5 3 8 0s5 3 7 0M1 14c3-3 5 3 8 0s5 3 7 0" stroke="#b8d8f0" stroke-width="1.8" fill="none"/></svg><svg style="left:108px;top:120px" width="17" height="17" viewBox="0 0 17 17"><path d="M2 8l5-6h7l1 6-5 7H2z" fill="#8080b8" stroke="#303060"/><path d="M7 2l-1 7 4 6M6 9l9-1" stroke="#303060" fill="none"/></svg><div class="t" style="left:131px;top:120px;font-family:'Liberation Serif',serif;font-weight:bold;font-size:15px;color:#4060a8;line-height:18px">G1</div><svg style="left:155px;top:120px" width="17" height="17" viewBox="0 0 17 17"><rect x="1" y="1" width="9" height="4" fill="#902080"/><path d="M3 5h5l-1 10H4z" fill="#9090a8" stroke="#505070"/><path d="M9 9h3V6l5 4.500-5 4.500v-3H9z" fill="#f0c0c0" stroke="#c03030"/></svg><div class="vl" style="left:178px;top:118px;height:22px;background:#808080"></div><div class="vl" style="left:179px;top:118px;height:22px;background:#fff"></div><svg style="left:184px;top:120px" width="17" height="17" viewBox="0 0 17 17"><path d="M3 13L10 4l4 3-7 9z" fill="#e02020" stroke="#801010"/><path d="M2 3l4 4M6 3L2 7M4 2v6" stroke="#303030"/><path d="M10 1c3 0 5 2 5 5" stroke="#606060" fill="none"/></svg><div class="vl" style="left:206px;top:118px;height:22px;background:#808080"></div><div class="vl" style="left:207px;top:118px;height:22px;background:#fff"></div><div class="t" style="left:212px;top:117px;font-size:11px;color:#404040">‹</div><svg style="left:5px;top:151px" width="17" height="17" viewBox="0 0 17 17"><path d="M1 4c3-3 5 3 7 0s4 2 6 0M1 9c3-3 5 3 7 0s4 2 6 0M1 14c3-3 5 3 7 0s4 2 6 0" stroke="#2080d0" stroke-width="2" fill="none"/></svg><svg style="left:28px;top:151px" width="17" height="17" viewBox="0 0 17 17"><path d="M2 15V6c0-6 11-6 11 0v9l-2-2-2 2-2-2-2 2z" fill="#f8f8f8" stroke="#606060"/><circle cx="5.500" cy="6" r="1.2"/><circle cx="9.500" cy="6" r="1.2"/><ellipse cx="7.500" cy="10" rx="1.300" ry="2"/></svg><div class="vl" style="left:50px;top:148px;height:22px;background:#808080"></div><div class="vl" style="left:51px;top:148px;height:22px;background:#fff"></div><svg style="left:56px;top:151px" width="17" height="17" viewBox="0 0 17 17"><path d="M1 4h16l-8 9z" fill="#e02020"/></svg><svg style="left:80px;top:151px" width="17" height="17" viewBox="0 0 17 17"><path d="M1 13h16L9 4z" fill="#e02020"/></svg><svg style="left:103px;top:151px" width="17" height="17" viewBox="0 0 17 17"><path d="M1 1h13v4h-3v-1H4v6h6" stroke="#e03020" stroke-width="2.4" fill="none"/><path d="M9 6l6 4-6 5z" fill="#e03020"/></svg><svg style="left:126px;top:151px" width="17" height="17" viewBox="0 0 17 17"><path d="M1 7h14L8 1zM1 10h14l-7 6z" fill="#e02020"/></svg><div class="vl" style="left:148px;top:148px;height:22px;background:#808080"></div><div class="vl" style="left:149px;top:148px;height:22px;background:#fff"></div><svg style="left:156px;top:151px" width="17" height="17" viewBox="0 0 17 17"><path d="M1 3c3-3 4 3 7 0s4 2 6 0M1 8c3-3 4 3 7 0s4 2 6 0M1 13c3-3 4 2 6 1" stroke="#3080c0" stroke-width="1.4" fill="none"/><path d="M9 8v8l2-2 2 3 1-1-2-3h3z" fill="#fff" stroke="#000" stroke-width=".8"/></svg><svg style="left:179px;top:151px" width="17" height="17" viewBox="0 0 17 17"><circle cx="6" cy="6" r="5" fill="none" stroke="#303030" stroke-width="1.3"/><rect x="7" y="7" width="8" height="8" fill="none" stroke="#e05040" stroke-width="1.3"/></svg><div class="hl" style="left:0px;top:145px;width:217px;background:#808080"></div><div class="hl" style="left:0px;top:146px;width:217px;background:#fff"></div><div class="a" style="left:8px;top:198px;width:0;height:24px;border-left:1px dotted #808080"></div><div class="a" style="left:13px;top:206px;width:8px;height:0;border-top:1px dotted #808080"></div><div class="a" style="left:13px;top:222px;width:6px;height:0;border-top:1px dotted #808080"></div><div class="a" style="left:27px;top:243px;width:0;height:76px;border-left:1px dotted #808080"></div><div class="a" style="left:31px;top:238px;width:8px;height:0;border-top:1px dotted #808080"></div><div class="a" style="left:45px;top:246px;width:0;height:56px;border-left:1px dotted #808080"></div><div class="a" style="left:45px;top:254px;width:12px;height:0;border-top:1px dotted #808080"></div><div class="a" style="left:45px;top:270px;width:12px;height:0;border-top:1px dotted #808080"></div><div class="a" style="left:45px;top:286px;width:12px;height:0;border-top:1px dotted #808080"></div><div class="a" style="left:45px;top:302px;width:12px;height:0;border-top:1px dotted #808080"></div><div class="a" style="left:27px;top:318px;width:10px;height:0;border-top:1px dotted #808080"></div><div class="a" style="left:4px;top:202px;width:9px;height:9px;border:1px solid #808080;background:#fff"></div><div class="a" style="left:6px;top:206px;width:5px;height:1px;background:#000;"></div><div class="a" style="left:8px;top:204px;width:1px;height:5px;background:#000;"></div><div class="a" style="left:4px;top:218px;width:9px;height:9px;border:1px solid #808080;background:#fff"></div><div class="a" style="left:6px;top:222px;width:5px;height:1px;background:#000;"></div><div class="a" style="left:23px;top:234px;width:9px;height:9px;border:1px solid #808080;background:#fff"></div><div class="a" style="left:25px;top:238px;width:5px;height:1px;background:#000;"></div><svg style="left:0px;top:182px" width="16" height="16" viewBox="0 0 16 16"><rect x="0" y="0" width="6" height="6" fill="#38c0ff" stroke="#1070b0"/><rect x="8" y="0" width="6" height="6" fill="#38c0ff" stroke="#1070b0"/><rect x="0" y="8" width="6" height="6" fill="#38c0ff" stroke="#1070b0"/><rect x="8" y="8" width="6" height="6" fill="#38c0ff" stroke="#1070b0"/></svg><svg style="left:19px;top:198px" width="16" height="16" viewBox="0 0 16 16"><circle cx="4" cy="4" r="3.300" fill="#38c0ff" stroke="#1070b0"/><circle cx="12" cy="4" r="3.300" fill="#38c0ff" stroke="#1070b0"/><circle cx="4" cy="12" r="3.300" fill="#38c0ff" stroke="#1070b0"/><circle cx="12" cy="12" r="3.300" fill="#38c0ff" stroke="#1070b0"/></svg><div class="a" style="left:18px;top:215px;width:16px;height:15px;background:#000;"></div><div class="t" style="left:19px;top:216px;color:#30e040;font-size:9px;line-height:12px;letter-spacing:-.5px">Cao</div><svg style="left:37px;top:231px" width="16" height="16" viewBox="0 0 16 16"><path d="M1 3h5l1 2h6v3H4l-3 6z" fill="#404000" stroke="#000"/><path d="M4 8h12l-3 6H1z" fill="#f0e040" stroke="#000"/></svg><svg style="left:56px;top:247px" width="16" height="16" viewBox="0 0 16 16"><path d="M1 2h6l2 2h6v11H1z" fill="#c0c0c0" stroke="#606060"/></svg><svg style="left:56px;top:262px" width="16" height="16" viewBox="0 0 16 16"><path d="M1 1l14 14M15 1L1 15" stroke="#e02020" stroke-width="2.4"/></svg><svg style="left:56px;top:278px" width="16" height="16" viewBox="0 0 16 16"><rect x="0" y="0" width="16" height="16" fill="#102808"/><path d="M11 2v8c0 3-2 4-5 4H3" stroke="#f0f060" stroke-width="1.4" fill="none"/><path d="M4 4l2 2M6 4L4 6" stroke="#30e040"/></svg><svg style="left:56px;top:294px" width="16" height="16" viewBox="0 0 16 16"><rect x="1" y="3" width="14" height="10" fill="#181818"/><path d="M1 1l14 14M15 1L1 15" stroke="#e02020" stroke-width="2.4"/></svg><svg style="left:37px;top:310px" width="16" height="16" viewBox="0 0 16 16"><rect x="0" y="1" width="15" height="15" fill="#186018" stroke="#000"/><path d="M3 6h9M3 9h9M3 12h9M6 5v9" stroke="#60e060" stroke-width="1.2"/><path d="M8 2h6v3" stroke="#60e060" fill="none"/></svg><div class="t lat" style="left:19px;top:183px;">Machine Group-1</div><div class="t" style="left:38px;top:199px;">属性<span class="l"> - LKM</span></div><div class="t" style="left:38px;top:215px;">刀具路径群组<span class="l"> 1</span></div><div class="a" style="left:56px;top:230px;width:96px;height:16px;background:#0a246a;"></div><div class="t" style="left:58px;top:231px;color:#fff"><span class="l">1 - </span>外形参数<span class="l"> (2D)</span></div><div class="t" style="left:77px;top:247px;">参数</div><div class="t" style="left:77px;top:263px;">此刀具并不存在!</div><div class="t" style="left:77px;top:279px;">图形<span class="l"> - (1) </span>串连<span class="l">(s)</span></div><div class="a" style="left:77px;top:295px;width:136px;height:14px;overflow:hidden"><div class="t" style="left:0;top:0">刀具路径<span class="l" style="letter-spacing:-.55px"> - E021-877793R-3</span></div></div><div class="a" style="left:1510px;top:70px;width:31px;height:951px;background:#d4d0c8;"></div><div class="vl" style="left:1510px;top:70px;height:951px;background:#fff"></div><div class="hl" style="left:1512px;top:72px;width:28px;background:#fff"></div><div class="hl" style="left:1512px;top:73px;width:28px;background:#808080"></div><div class="hl" style="left:1512px;top:75px;width:28px;background:#fff"></div><div class="hl" style="left:1512px;top:76px;width:28px;background:#808080"></div><div class="hl" style="left:1516px;top:79px;width:20px;background:#fff"></div><div class="hl" style="left:1516px;top:80px;width:20px;background:#808080"></div><div class="hl" style="left:1516px;top:263px;width:20px;background:#808080"></div><div class="hl" style="left:1516px;top:264px;width:20px;background:#fff"></div><div class="hl" style="left:1516px;top:316px;width:20px;background:#808080"></div><div class="hl" style="left:1516px;top:317px;width:20px;background:#fff"></div><div class="hl" style="left:1516px;top:367px;width:20px;background:#808080"></div><div class="hl" style="left:1516px;top:368px;width:20px;background:#fff"></div><div class="hl" style="left:1516px;top:398px;width:20px;background:#808080"></div><div class="hl" style="left:1516px;top:399px;width:20px;background:#fff"></div><svg style="left:1518px;top:86px" width="17" height="17" viewBox="0 0 17 17"><g style="filter:drop-shadow(1px 1px 0 #fff)"><path d="M5 1h6v4h4v6h-4v4H5v-4H1V5h4z" fill="#808080"/><path d="M1 4l4-3" stroke="#808080"/></g></svg><svg style="left:1518px;top:109px" width="17" height="17" viewBox="0 0 17 17"><g style="filter:drop-shadow(1px 1px 0 #fff)"><path d="M1 13c0-5 2-8 5-8h5c3 0 4 3 4 7l-3 1-2-3H7l-3 4z" fill="#808080"/><path d="M3 5l5-4" stroke="#808080" stroke-width="1.5"/></g></svg><svg style="left:1518px;top:130px" width="17" height="17" viewBox="0 0 17 17"><g style="filter:drop-shadow(1px 1px 0 #fff)"><path d="M2 12L11 3M4 15L14 5M1 8h5M2 14h4" stroke="#808080" stroke-width="1.3" fill="none"/><path d="M13 1v4M11 3h4" stroke="#808080"/></g></svg><svg style="left:1518px;top:152px" width="17" height="17" viewBox="0 0 17 17"><g style="filter:drop-shadow(1px 1px 0 #fff)"><circle cx="9" cy="9" r="6" fill="none" stroke="#808080" stroke-width="1.3"/><path d="M1 9l6-6M2 12l4-3" stroke="#808080"/></g></svg><svg style="left:1518px;top:174px" width="17" height="17" viewBox="0 0 17 17"><g style="filter:drop-shadow(1px 1px 0 #fff)"><path d="M3 15V9h11V2" fill="none" stroke="#808080" stroke-width="2.2"/><path d="M1 8l6-6M1 11l4-3" stroke="#808080"/></g></svg><svg style="left:1518px;top:196px" width="17" height="17" viewBox="0 0 17 17"><g style="filter:drop-shadow(1px 1px 0 #fff)"><rect x="1" y="1" width="15" height="14" fill="#808080"/></g></svg><svg style="left:1518px;top:218px" width="17" height="17" viewBox="0 0 17 17"><g style="filter:drop-shadow(1px 1px 0 #fff)"><path d="M5 3l6-1 4 4v6l-4 3H6l-3-4z" fill="#808080"/><path d="M1 8l6-6M1 12l4-4" stroke="#808080"/></g></svg><svg style="left:1518px;top:241px" width="17" height="17" viewBox="0 0 17 17"><g style="filter:drop-shadow(1px 1px 0 #fff)"><circle cx="8.5" cy="8.5" r="6.5" fill="none" stroke="#808080" stroke-width="1.3"/><path d="M2 8.5h13M8.5 2v13M4 4.5h9M4 12.5h9M5.5 3v11M11.5 3v11" stroke="#808080" stroke-width=".8"/></g></svg><svg style="left:1518px;top:270px" width="17" height="17" viewBox="0 0 17 17"><g style="filter:drop-shadow(1px 1px 0 #fff)"><rect x="7" y="2" width="8" height="7" fill="#808080"/><rect x="3" y="8" width="7" height="7" fill="#808080"/><path d="M1 7l6-6M1 10l4-3" stroke="#808080"/></g></svg><svg style="left:1518px;top:292px" width="17" height="17" viewBox="0 0 17 17"><g style="filter:drop-shadow(1px 1px 0 #fff)"><rect x="7" y="2" width="8" height="7" fill="#808080"/><rect x="3" y="8" width="7" height="7" fill="#808080"/><path d="M1 7l6-6M1 10l4-3" stroke="#808080"/></g></svg><svg style="left:1518px;top:321px" width="17" height="17" viewBox="0 0 17 17"><g style="filter:drop-shadow(1px 1px 0 #fff)"><rect x="4" y="4" width="12" height="11" fill="#808080"/><path d="M1 8l7-7M1 11l3-3" stroke="#808080"/></g></svg><svg style="left:1518px;top:345px" width="17" height="17" viewBox="0 0 17 17"><g style="filter:drop-shadow(1px 1px 0 #fff)"><rect x="4" y="4" width="12" height="11" fill="#808080"/><rect x="7" y="10" width="7" height="3" fill="#d4d0c8"/><path d="M1 8l7-7M1 11l3-3" stroke="#808080"/></g></svg><svg style="left:1518px;top:375px" width="17" height="17" viewBox="0 0 17 17"><g style="filter:drop-shadow(1px 1px 0 #fff)"><path d="M2 2v14M15 2v14M3 10h11" stroke="#808080" stroke-width="1.4"/><path d="M10 7l4 3-4 3z" fill="#808080"/><path d="M2 8l6-6" stroke="#808080"/></g></svg><svg style="left:1518px;top:404px" width="17" height="17" viewBox="0 0 17 17"><g style="filter:drop-shadow(1px 1px 0 #fff)"><circle cx="8.5" cy="8.5" r="6" fill="none" stroke="#808080" stroke-width="2"/><path d="M4 13L13 4" stroke="#808080" stroke-width="2.5"/></g></svg><svg style="left:1518px;top:425px" width="17" height="17" viewBox="0 0 17 17"><g style="filter:drop-shadow(1px 1px 0 #fff)"><path d="M3 6l5-4 6 4 1 4-5 5-4-3z" fill="#808080"/><path d="M1 9l6-7M2 13l4-4" stroke="#808080"/></g></svg><svg style="left:1518px;top:447px" width="17" height="17" viewBox="0 0 17 17"><g style="filter:drop-shadow(1px 1px 0 #fff)"><path d="M3 15V9c3-5 8-5 11 0v3" fill="none" stroke="#808080" stroke-width="2.5"/><path d="M1 7l6-6M1 11l4-4" stroke="#808080"/></g></svg><div class="hl" style="left:1512px;top:472px;width:28px;background:#808080"></div><div class="hl" style="left:1516px;top:476px;width:20px;background:#fff"></div><div class="hl" style="left:1516px;top:477px;width:20px;background:#808080"></div><svg style="left:1518px;top:487px" width="17" height="17" viewBox="0 0 17 17"><rect x="6" y="6" width="9" height="9" fill="#8c8cd8" stroke="#4848a8"/><path d="M2 13V2h11" fill="none" stroke="#3868c8" stroke-width="1.5"/></svg><svg style="left:1518px;top:507px" width="17" height="17" viewBox="0 0 17 17"><circle cx="10" cy="6" r="5" fill="#d8e8f8" stroke="#6888b8" stroke-width="1.3"/><rect x="7" y="5" width="6" height="2" fill="#d02020"/><path d="M6 10l-4 4" stroke="#e0a020" stroke-width="3"/></svg><svg style="left:1518px;top:530px" width="17" height="17" viewBox="0 0 17 17"><path d="M8 0l4 4H10v2h2V4l4 4-4 4v-2h-2v2h2l-4 4-4-4h2v-2H4v2L0 8l4-4v2h2V4H4z" fill="#2060d0"/><rect x="6" y="6" width="4" height="4" fill="#a0c0f0"/></svg><svg style="left:1518px;top:552px" width="17" height="17" viewBox="0 0 17 17"><path d="M2 5l6-3 7 3v7l-7 3-6-3z" fill="#e8e8d0" stroke="#507020"/><path d="M2 5l6-3 7 3-7 3z" fill="#70a830" stroke="#507020"/><path d="M8 8v7" stroke="#507020"/></svg><svg style="left:1518px;top:574px" width="17" height="17" viewBox="0 0 17 17"><path d="M1 6h13l-2 9H1z" fill="#f8e040" stroke="#c0a020"/><path d="M7 6c1-4 4-4 6-4V0l3 3-3 3V4c-2 0-3 0-4 2z" fill="#30a030"/></svg><svg style="left:1518px;top:595px" width="17" height="17" viewBox="0 0 17 17"><path d="M3 12V3h9M13 5v9H5" fill="none" stroke="#209020" stroke-width="2"/><circle cx="8" cy="8" r="2" fill="#606060"/><circle cx="13" cy="2" r="1.6" fill="#606060"/><circle cx="3" cy="14" r="1.6" fill="#606060"/></svg><svg style="left:1518px;top:617px" width="17" height="17" viewBox="0 0 17 17"><path d="M1 1h9v14H1z" fill="#5050b8"/><rect x="3" y="2" width="5" height="5" fill="#d0d0f0"/><rect x="7" y="2" width="8" height="12" fill="none" stroke="#303030" stroke-dasharray="1.5 1.5"/></svg><svg style="left:1518px;top:639px" width="17" height="17" viewBox="0 0 17 17"><path d="M1 2h7v12H1z" fill="#5050b8"/><path d="M8 4h7v11H8z" fill="#6868c8"/><rect x="4" y="6" width="8" height="4" fill="#d8d8f0"/></svg><svg style="left:1518px;top:661px" width="17" height="17" viewBox="0 0 17 17"><rect x="1" y="1" width="14" height="12" fill="none" stroke="#303030" stroke-dasharray="1.5 1.5"/><circle cx="9" cy="7" r="4.5" fill="#b8d8f8" stroke="#6888b8"/><path d="M5 11l-3 4" stroke="#e0a020" stroke-width="3"/></svg><svg style="left:1518px;top:684px" width="17" height="17" viewBox="0 0 17 17"><path d="M3 1v15" stroke="#2060d0" stroke-width="2"/><path d="M13 1v15" stroke="#a01060" stroke-width="2"/><path d="M5 8h4M8 5l3 3-3 3z" stroke="#2060d0" fill="#2060d0"/></svg><div class="hl" style="left:1511px;top:707px;width:30px;background:#808080"></div><div class="hl" style="left:1511px;top:708px;width:30px;background:#fff"></div><div class="hl" style="left:-60px;top:1020px;width:1700px;background:#808080"></div><div class="hl" style="left:-60px;top:1021px;width:1700px;background:#fff"></div><div class="flat" style="left:795px;top:1025px;width:24px;height:22px;font-size:11px">2D</div><div class="flat" style="left:822px;top:1025px;width:54px;height:22px;">屏幕视角</div><div class="flat" style="left:878px;top:1025px;width:54px;height:22px;">刀具平面</div><div class="flat" style="left:934px;top:1025px;width:98px;height:22px;"></div><div class="t lat" style="left:942px;top:1028px;">Z:</div><div class="sunk y" style="left:955px;top:1026px;width:76px;height:20px;font-size:11px;padding-top:4px">0.0</div><div class="dd" style="left:1013px;top:1028px;height:16px"></div><div class="flat" style="left:1034px;top:1025px;width:50px;height:22px;"></div><div class="a" style="left:1037px;top:1027px;width:29px;height:18px;background:#7b3f00;text-align:center;font-size:11px;line-height:16px"></div><div class="t lat" style="left:1048px;top:1028px;">6</div><div class="a" style="left:1071px;top:1032px;border:5px solid transparent;border-top:9px solid #000;border-bottom:0"></div><div class="flat" style="left:1086px;top:1025px;width:124px;height:22px;"></div><div class="t" style="left:1092px;top:1028px;">层别:</div><div class="sunk " style="left:1122px;top:1026px;width:87px;height:20px;font-size:11px;padding-top:4px">2</div><div class="dd" style="left:1191px;top:1028px;height:16px"></div><div class="flat" style="left:1214px;top:1025px;width:33px;height:22px;">属性</div><div class="flat" style="left:1250px;top:1025px;width:34px;height:22px;"></div><div class="sunk " style="left:1253px;top:1027px;width:30px;height:19px;"></div><div class="t" style="left:1257px;top:1031px;font-size:15px">∗</div><div class="dd" style="left:1266px;top:1029px;height:15px"></div><div class="flat" style="left:1286px;top:1025px;width:64px;height:22px;"></div><div class="sunk " style="left:1288px;top:1027px;width:60px;height:19px;"></div><div class="a" style="left:1293px;top:1035px;width:36px;height:3px;background:#000;"></div><div class="dd" style="left:1331px;top:1029px;height:15px"></div><div class="flat" style="left:1353px;top:1025px;width:68px;height:22px;"></div><div class="sunk " style="left:1355px;top:1027px;width:64px;height:19px;"></div><div class="a" style="left:1360px;top:1036px;width:40px;height:1px;background:#000;"></div><div class="dd" style="left:1402px;top:1029px;height:15px"></div><div class="flat" style="left:1426px;top:1025px;width:37px;height:22px;font-size:11px">WCS</div><div class="flat" style="left:1468px;top:1025px;width:40px;height:22px;">群组</div><div class="flat" style="left:1512px;top:1025px;width:16px;height:22px;font-size:11px">!</div><div class="flat" style="left:1531px;top:1025px;width:16px;height:22px;font-size:11px">?</div><div class="hl" style="left:-60px;top:1049px;width:1700px;background:#fff"></div><div class="btn " style="left:-56px;top:1053px;width:46px;height:22px;line-height:20px;"></div><svg style="left:-52px;top:1056px" width="16" height="16" viewBox="0 0 16 16"><path d="M1 3c2-1 4-1 6 0v5c-2-1-4-1-6 0z" fill="#e04020"/><path d="M8 3c2 1 4 1 6 0v5c-2 1-4 1-6 0z" fill="#40a030"/><path d="M1 9c2-1 4-1 6 0v5c-2-1-4-1-6 0z" fill="#3060d0"/><path d="M8 9c2 1 4 1 6 0v5c-2 1-4 1-6 0z" fill="#f0c020"/></svg><div class="t" style="left:-36px;top:1057px;font-size:11px;letter-spacing:-.2px">Start</div><svg style="left:-2px;top:1055px" width="16" height="16" viewBox="0 0 16 16"><path d="M3 3l3 12h5l3-12z" fill="#d8d8c0" stroke="#909070"/><path d="M5 2l3 9M9 1l0 10M12 2l-3 9" stroke="#c04020" stroke-width="1.3"/><path d="M7 3l1 8" stroke="#30a030"/></svg><svg style="left:21px;top:1055px" width="16" height="16" viewBox="0 0 16 16"><rect x="1" y="1" width="15" height="15" fill="#c02020"/><rect x="3" y="3" width="4" height="12" fill="#f0e0e0"/><rect x="9" y="6" width="5" height="9" fill="#e8e8e8"/><path d="M1 5h15" stroke="#400000"/><path d="M8 1v15" stroke="#400000"/></svg><svg style="left:43px;top:1055px" width="16" height="16" viewBox="0 0 16 16"><rect x="2" y="2" width="13" height="13" rx="3" fill="#3880e0" stroke="#1850a0"/><path d="M11 5H7C5 5 5 11 7 11h4M6 8h5" stroke="#fff" stroke-width="1.6" fill="none"/><path d="M12 1l3 3" stroke="#80b0f0" stroke-width="2"/></svg><div class="t" style="left:90px;top:1053px;font-size:13px;font-weight:bold">»</div><div class="tb" style="left:102px;top:1052px;width:159px;height:22px">C:\mcamx\chooks</div><svg style="left:106px;top:1055px" width="16" height="16" viewBox="0 0 16 16"><path d="M1 4h5l2 2h7v8H1z" fill="#f0d060" stroke="#a08020"/><path d="M1 14l2-7h13l-2 7z" fill="#f8e890" stroke="#a08020"/></svg><div class="tb" style="left:265px;top:1052px;width:159px;height:22px">C:\Mcam9\Chooks</div><svg style="left:269px;top:1055px" width="16" height="16" viewBox="0 0 16 16"><path d="M1 4h5l2 2h7v8H1z" fill="#f0d060" stroke="#a08020"/><path d="M1 14l2-7h13l-2 7z" fill="#f8e890" stroke="#a08020"/></svg><div class="tb" style="left:428px;top:1052px;width:159px;height:22px">NX 7.5 - 建模 - [123.prt]</div><svg style="left:432px;top:1055px" width="16" height="16" viewBox="0 0 16 16"><circle cx="8" cy="8" r="7" fill="#2868c8"/><path d="M2 5l6 8 6-9" stroke="#e03030" stroke-width="2.4" fill="none"/><circle cx="8" cy="8" r="2.4" fill="#f0f0f8"/></svg><div class="tb" style="left:591px;top:1052px;width:159px;height:22px;border-color:#404040 #fff #fff #404040;box-shadow:inset 1px 1px 0 #808080;background:#e9e7e2;padding-left:25px;line-height:21px">Mastercam Mill X3 MU1&nbsp; E…</div><svg style="left:596px;top:1056px" width="16" height="16" viewBox="0 0 16 16"><path d="M1 1h4l10 14h-4z" fill="#101010"/><path d="M15 1h-4L1 15h4z" fill="#808080"/><path d="M10 2l3 5" stroke="#20a0c0" stroke-width="2"/></svg><svg style="left:1401px;top:1055px" width="16" height="16" viewBox="0 0 16 16"><path d="M1 8l10-3 5 4-10 5z" fill="#c8c8d8" stroke="#707088"/><path d="M4 8l8 0M5 10l8 0" stroke="#707088" stroke-dasharray="1 1"/><path d="M8 5c0-3 3-4 5-3" stroke="#707088" fill="none"/></svg><svg style="left:1427px;top:1056px" width="16" height="16" viewBox="0 0 16 16"><circle cx="8" cy="8" r="6.5" fill="#3068d0" stroke="#18408c"/><text x="8" y="12" font-size="10" font-weight="bold" fill="#fff" text-anchor="middle" font-family="Liberation Sans,sans-serif">?</text></svg><div class="a" style="left:1445px;top:1051px;width:96px;height:25px;border:1px solid;border-color:#808080 #fff #fff #808080"></div><div class="t" style="left:1449px;top:1055px;font-size:14px;font-weight:bold">«</div><svg style="left:1462px;top:1055px" width="16" height="16" viewBox="0 0 16 16"><rect x="1" y="1" width="8" height="7" fill="#3070d0" stroke="#103070"/><rect x="3" y="3" width="4" height="3" fill="#a0d0f8"/><rect x="7" y="8" width="8" height="7" fill="#3070d0" stroke="#103070"/><rect x="9" y="10" width="4" height="3" fill="#a0d0f8"/></svg><svg style="left:1482px;top:1055px" width="16" height="16" viewBox="0 0 16 16"><path d="M2 1h12v8c0 4-3 6-6 7-3-1-6-3-6-7z" fill="#f0c840" stroke="#a07818"/><path d="M5 1v13M8 1v15" stroke="#f8e8a0"/><circle cx="12" cy="12" r="3.5" fill="#fff" stroke="#d02020" stroke-width="1.4"/><path d="M9.8 14.2l4.4-4.4" stroke="#d02020" stroke-width="1.4"/></svg><div class="t lat" style="left:1503px;top:1058px;">16:25</div><svg style="left:221px;top:70px;overflow:hidden" width="1289" height="950" viewBox="0 0 1289 950"><defs><pattern id="hat" width="3" height="3" patternUnits="userSpaceOnUse" patternTransform="rotate(45)"><rect width="3" height="3" fill="#7b3f00"/><rect width="3" height="1.300" fill="#d8d838"/></pattern></defs><g transform="translate(-221,-70)" fill="none" stroke-width="1.200"><rect x="375.500" y="248.500" width="87" height="562" stroke="#40e040"/><path d="M375 508.500h15M375 555.500h15" stroke="#d0e060"/><path d="M375 530.500h15" stroke="#e00000" stroke-width="1.600"/><path d="M852 237Q862 229 872 237" stroke="#e01010" stroke-width="1.500"/><path d="M514.500 790V808 M473 811.500H502V857 M490.500 811.500V822.500H502" stroke="#30e0d0"/><rect x="541.500" y="249.500" width="813" height="561" fill="#7b3f00" stroke="#40e040" stroke-width="1.500"/><path d="M541 530.500H1268" stroke="#d01010" stroke-width="1.300"/><path d="M948.500 250V811" stroke="#d01010" stroke-width="1.300"/><path d="M857.500 790V818" stroke="#e01010"/><path d="M857.500 814v7h6" stroke="#f0d0d0"/><circle cx="701.5" cy="302.5" r="38.75" stroke="#30e0d0"/><circle cx="701.5" cy="302.5" r="34.75" stroke="#30e0d0"/><circle cx="701.5" cy="302.5" r="25" stroke="#30e0d0"/><path d="M656.5 302.5h90M701.5 257.5v90" stroke="#30e0d0"/><circle cx="701.5" cy="757.5" r="38.75" stroke="#30e0d0"/><circle cx="701.5" cy="757.5" r="34.75" stroke="#30e0d0"/><circle cx="701.5" cy="757.5" r="25" stroke="#30e0d0"/><path d="M656.5 757.5h90M701.5 712.5v90" stroke="#30e0d0"/><circle cx="1194.5" cy="302.5" r="38.75" stroke="#30e0d0"/><circle cx="1194.5" cy="302.5" r="34.75" stroke="#30e0d0"/><circle cx="1194.5" cy="302.5" r="25" stroke="#30e0d0"/><path d="M1149.5 302.5h90M1194.5 257.5v90" stroke="#30e0d0"/><circle cx="1194.5" cy="757.5" r="38.75" stroke="#30e0d0"/><circle cx="1194.5" cy="757.5" r="34.75" stroke="#30e0d0"/><circle cx="1194.5" cy="757.5" r="25" stroke="#30e0d0"/><path d="M1149.5 757.5h90M1194.5 712.5v90" stroke="#30e0d0"/><circle cx="595.5" cy="302.5" r="34" stroke="#e0e030"/><path d="M557.5 302.5h76M595.5 265v75" stroke="#e0e030"/><circle cx="595.5" cy="757.5" r="34" stroke="#e0e030"/><path d="M557.5 757.5h76M595.5 720v75" stroke="#e0e030"/><circle cx="1300.5" cy="302.5" r="34" stroke="#e0e030"/><path d="M1262.5 302.5h76M1300.5 265v75" stroke="#e0e030"/><circle cx="1300.5" cy="757.5" r="34" stroke="#e0e030"/><path d="M1262.5 757.5h76M1300.5 720v75" stroke="#e0e030"/><path d="M1082 352H1231q4 0 6 4" stroke="#2814a8" stroke-width="4"/><path d="M1082 355.500H1252A9.500 9.500 0 1 1 1265.500 368" stroke="#30e0d0"/><path d="M1252 355.500A9.500 9.500 0 1 1 1265.500 368" stroke="#40e040"/><path d="M1265.500 368V485A10.300 10.300 0 0 1 1265.500 505.500H1247.500V531" stroke="#30e0d0"/><path d="M1236.500 356V370" stroke="#a0a0a0" stroke-width="1"/><rect x="1116" y="467" width="132" height="19.500" stroke="#30e0d0"/><path d="M1082 467H1091.500V486.500H1082" stroke="#30e0d0"/><circle cx="1312.500" cy="388.500" r="19" stroke="#e0e030"/><path d="M1291 388.500h43M1312.500 367v43" stroke="#e0e030"/><g transform="translate(0,1061) scale(1,-1)"><path d="M1082 352H1231q4 0 6 4" stroke="#2814a8" stroke-width="4"/><path d="M1082 355.500H1252A9.500 9.500 0 1 1 1265.500 368" stroke="#30e0d0"/><path d="M1252 355.500A9.500 9.500 0 1 1 1265.500 368" stroke="#40e040"/><path d="M1265.500 368V485A10.300 10.300 0 0 1 1265.500 505.500H1247.500V531" stroke="#30e0d0"/><path d="M1236.500 356V370" stroke="#a0a0a0" stroke-width="1"/><rect x="1116" y="467" width="132" height="19.500" stroke="#30e0d0"/><path d="M1082 467H1091.500V486.500H1082" stroke="#30e0d0"/><circle cx="1312.500" cy="388.500" r="19" stroke="#e0e030"/><path d="M1291 388.500h43M1312.500 367v43" stroke="#e0e030"/></g><path d="M1312.500 369.5 A19 19 0 0 1 1331.500 388.5 H1312.500z" fill="url(#hat)" stroke="none"/><path d="M1312.500 407.5 A19 19 0 0 1 1293.500 388.5 H1312.500z" fill="url(#hat)" stroke="none"/><text x="0" y="0" transform="translate(1315,392.5) rotate(78)" fill="#fff" stroke="none" font-size="8" font-style="italic" font-weight="bold" font-family="Liberation Sans,sans-serif">RP</text><path d="M1312.500 652.5 A19 19 0 0 1 1331.500 671.5 H1312.500z" fill="url(#hat)" stroke="none"/><path d="M1312.500 690.5 A19 19 0 0 1 1293.500 671.5 H1312.500z" fill="url(#hat)" stroke="none"/><text x="0" y="0" transform="translate(1315,675.5) rotate(78)" fill="#fff" stroke="none" font-size="8" font-style="italic" font-weight="bold" font-family="Liberation Sans,sans-serif">RP</text><path d="M1265.500 505V556" stroke="#a01010"/><path d="M1082 517.500H1136L1153 492.500Q1156 489.500 1160 492.500L1215 530.500L1193 567Q1190 571 1185 568.500L1145 542.500H1082" fill="#000" stroke="#e0e030"/><path d="M1082 530.500H1215" stroke="#c01010" stroke-width="1.300"/><path d="M1268.500 530.500H1357" stroke="#e0e030"/><path d="M1268.500 530.500L1280 513.500H1350.500V546.500H1280z" stroke="#e0e030"/><path d="M1280 513.500V546.500" stroke="#e0e030"/><rect x="1292" y="511" width="58.500" height="38" stroke="#e0e030"/><path d="M1350.500 511L1354.500 507.500M1350.500 549L1354.500 553" stroke="#e0e030"/></g></svg><div class="a" style="left:389px;top:235px;width:693px;height:555px;background:#d4d0c8;border:1px solid;border-color:#d4d0c8 #404040 #404040 #d4d0c8;box-shadow:inset 1px 1px 0 #fff,inset -1px -1px 0 #808080"></div><div class="a" style="left:392px;top:238px;width:687px;height:18px;background:linear-gradient(90deg,#0a246a,#a6caf0)"></div><div class="t" style="left:394px;top:239px;color:#fff;font-weight:bold;font-size:12px;line-height:16px">外形参数 (2D)</div><div class="btn " style="left:1061px;top:240px;width:16px;height:14px;line-height:12px;"></div><svg style="left:1065px;top:243px" width="8" height="8" viewBox="0 0 8 8"><path d="M0 0 L8 7 M8 0 L0 7" stroke="#000" stroke-width="1.600"/></svg><div class="a" style="left:399px;top:285px;width:675px;height:462px;border:1px solid;border-color:#fff #404040 #404040 #fff;box-shadow:inset -1px -1px 0 #808080"></div><div class="a" style="left:401px;top:267px;width:82px;height:18px;border:1px solid;border-color:#fff #404040 transparent #fff;border-bottom:0;border-radius:2px 2px 0 0;box-shadow:inset -1px 0 0 #808080"></div><div class="t" style="left:406px;top:269px;">刀具路径参数</div><div class="a" style="left:483px;top:264px;width:87px;height:23px;background:#d4d0c8;border:1px solid;border-color:#fff #404040 transparent #fff;border-bottom:0;border-radius:2px 2px 0 0;box-shadow:inset -1px 0 0 #808080"></div><div class="t" style="left:490px;top:268px;">外形加工参数</div><svg style="left:408px;top:299px" width="198" height="289" viewBox="0 0 198 289"><rect x="0.500" y="0.500" width="197" height="288" fill="#c0c0c0" stroke="#000"/><path d="M59.5 1 L116.5 1 L120.5 18.5 L55.5 18.5 z" fill="#808080" stroke="#000" stroke-width="1.800" stroke-linejoin="round"/><path d="M47 18.5 L129 18.5 L130 20 L127 23 L49 23 L46 20 z" fill="#808080" stroke="#000" stroke-width="1.3"/><rect x="50" y="23" width="75" height="6" fill="#808080" stroke="#000" stroke-width="1.3"/><path d="M49 29 L127 29 L130 31 L129.5 33.5 L46.5 33.5 L46 31 z" fill="#808080" stroke="#000" stroke-width="1.3"/><rect x="59" y="33.8" width="58" height="21" fill="#808080" stroke="#000" stroke-width="1.800" stroke-linejoin="round"/><rect x="66.7" y="54.8" width="43" height="36" rx="1.500" fill="#808080" stroke="#000" stroke-width="1.800" stroke-linejoin="round"/><path d="M68 87 H109" stroke="#000" stroke-width="1"/><path d="M81 91 L95.5 91 L95.5 106 L97 109 L97 144.5 L79 144.5 L79 109 L81 106 z" fill="#0a0a88" stroke="#000050" stroke-width=".600"/><path d="M80.5 128 q1 -3 1.500 -6 q1 -3 1.500 -4 M82 143 q1 -6 4 -11 q3 -6 5 -13 M89.5 143 q2 -6 6 -12" stroke="#f0f0ff" stroke-width="1" fill="none"/><path d="M11 217 L41 217 L41 261 L134.5 261 L134.5 217 L169.5 217 L169.5 283.5 L11 283.5 z" fill="#808080" stroke="#000" stroke-width="1"/><path d="M97 144 H139 V14 H198" stroke="#e00000" stroke-width="1.800" fill="none"/><path d="M124 161 H155.5 V90.5 H198" stroke="#e00000" stroke-width="1.800" fill="none"/><path d="M87 192 H171 V137 H198" stroke="#e00000" stroke-width="1.800" fill="none"/><path d="M169 217 H184.5 V201 H198" stroke="#e00000" stroke-width="1.800" fill="none"/><path d="M87 260.5 H198" stroke="#e00000" stroke-width="1.800" fill="none"/><path d="M87 144 V191" stroke="#f0f000" stroke-width="1"/><path d="M87 191 l-3 -7 h6 z" fill="#f0f000"/><path d="M124.5 191 V162" stroke="#f0f000" stroke-width="1"/><path d="M124.5 162 l-3 7 h6 z" fill="#f0f000"/><path d="M87 193 V259" stroke="#00e0e0" stroke-width="1"/><path d="M87 259 l-3 -5 l3 -3 l3 3 z" fill="#00e0e0"/><path d="M124.5 260 V194" stroke="#00e0e0" stroke-width="1"/><path d="M124.5 194 l-3 5 l3 3 l3 -3 z" fill="#00e0e0"/></svg><div class="vl" style="left:606px;top:299px;height:290px;background:#fff"></div><div class="hl" style="left:408px;top:588px;width:199px;background:#fff"></div><div class="cb" style="left:611px;top:306px;background:#fff"><svg width="9" height="9" style="left:1px;top:1px" viewBox="0 0 9 9"><path d="M1 3.5 L3.5 6 L8 1.5" fill="none" stroke="#000" stroke-width="2"/></svg></div><div class="btn " style="left:632px;top:301px;width:81px;height:22px;line-height:20px;">安全高度...</div><div class="sunk y" style="left:723px;top:301px;width:60px;height:22px;font-size:12px">5.0</div><div class="rd on" style="left:633px;top:328px"></div><div class="t" style="left:650px;top:328px;">绝对座标</div><div class="rd" style="left:709px;top:328px"></div><div class="t" style="left:726px;top:328px;">增量座标</div><div class="cb" style="left:611px;top:387px;background:#fff"></div><div class="btn dis" style="left:632px;top:382px;width:81px;height:22px;line-height:20px;">参考高度...</div><div class="sunk dis" style="left:723px;top:382px;width:60px;height:22px;font-size:12px">3.0</div><div class="rd gr" style="left:633px;top:409px"></div><div class="t dis" style="left:650px;top:409px;">绝对座标</div><div class="rd on gr" style="left:709px;top:409px"></div><div class="t dis" style="left:726px;top:409px;">增量座标</div><div class="btn " style="left:632px;top:427px;width:81px;height:22px;line-height:20px;">进给下刀位置</div><div class="sunk y" style="left:723px;top:427px;width:60px;height:22px;font-size:12px">3.0</div><div class="rd" style="left:633px;top:454px"></div><div class="t" style="left:650px;top:454px;">绝对座标</div><div class="rd on" style="left:709px;top:454px"></div><div class="t" style="left:726px;top:454px;">增量座标</div><div class="btn " style="left:632px;top:492px;width:81px;height:22px;line-height:20px;">工件表面</div><div class="sunk y" style="left:723px;top:492px;width:60px;height:22px;font-size:12px">0.0</div><div class="rd on" style="left:633px;top:519px"></div><div class="t" style="left:650px;top:519px;">绝对座标</div><div class="rd" style="left:709px;top:519px"></div><div class="t" style="left:726px;top:519px;">增量座标</div><div class="btn " style="left:632px;top:544px;width:81px;height:22px;line-height:20px;">深度...</div><div class="sunk y" style="left:723px;top:544px;width:60px;height:22px;font-size:11px;padding-left:6px;padding-top:4px">1-0.3</div><div class="rd on" style="left:633px;top:571px"></div><div class="t" style="left:650px;top:571px;">绝对座标</div><div class="t" style="left:413px;top:629px;">外形铣削类型:</div><div class="sunk " style="left:497px;top:626px;width:161px;height:21px;font-size:12px;font-size:11px">2D</div><div class="dd" style="left:640px;top:628px;height:17px"></div><div class="btn " style="left:672px;top:626px;width:32px;height:22px;line-height:20px;"></div><svg style="left:683px;top:628px" width="9" height="18" viewBox="0 0 9 18"><path d="M1 0h7l-1.500 11h-4z" fill="#808080"/><circle cx="4.500" cy="15" r="2.800" fill="#808080"/></svg><div class="cb" style="left:752px;top:602px;background:#fff"></div><div class="btn dis" style="left:770px;top:598px;width:80px;height:22px;line-height:20px;"><span class="l">XY</span>轴分层切削</div><div class="cb" style="left:752px;top:631px;background:#fff"></div><div class="btn dis" style="left:770px;top:627px;width:80px;height:22px;line-height:20px;"><span class="l">Z</span>轴分层铣深</div><div class="cb" style="left:752px;top:660px;background:#fff"></div><div class="btn dis" style="left:770px;top:657px;width:80px;height:22px;line-height:20px;"><span class="l">B</span>贯穿...</div><div class="cb" style="left:863px;top:602px;background:#fff"><svg width="9" height="9" style="left:1px;top:1px" viewBox="0 0 9 9"><path d="M1 3.5 L3.5 6 L8 1.5" fill="none" stroke="#000" stroke-width="2"/></svg></div><div class="btn " style="left:884px;top:598px;width:80px;height:22px;line-height:20px;"><span class="l">L</span>进/退刀向量</div><div class="cb" style="left:863px;top:631px;background:#fff"></div><div class="btn dis" style="left:884px;top:627px;width:80px;height:22px;line-height:20px;"><span class="l">F</span>过虑</div><div class="cb" style="left:863px;top:660px;background:#fff"></div><div class="btn dis" style="left:884px;top:657px;width:80px;height:22px;line-height:20px;"><span class="l">S</span>毛头</div><div class="t" style="left:857px;top:299px;">补正</div><div class="t" style="left:851px;top:312px;">型式:</div><div class="sunk " style="left:887px;top:302px;width:109px;height:22px;font-size:12px;padding-left:5px;padding-top:4px">电脑</div><div class="dd" style="left:978px;top:304px;height:18px"></div><div class="t" style="left:857px;top:333px;">补正</div><div class="t" style="left:851px;top:346px;">方向:</div><div class="sunk " style="left:887px;top:336px;width:72px;height:21px;font-size:12px;padding-left:4px">左边</div><div class="dd" style="left:941px;top:338px;height:17px"></div><div class="a" style="left:966px;top:326px;width:33px;height:33px;background:#c0c0c0;border:1px solid;border-color:#000 #fff #fff #000"></div><svg style="left:966px;top:326px" width="33" height="33" viewBox="0 0 33 33"><circle cx="9" cy="18" r="7" fill="none" stroke="#000" stroke-width="1.2"/><path d="M16.500 30V6" stroke="#0000e0" stroke-width="1.800"/><path d="M16.500 2l-4 7h8z" fill="#0000e0"/></svg><div class="cb" style="left:818px;top:365px;background:#d4d0c8"><svg width="9" height="9" style="left:1px;top:1px" viewBox="0 0 9 9"><path d="M1 3.5 L3.5 6 L8 1.5" fill="none" stroke="#808080" stroke-width="2"/></svg></div><div class="t dis" style="left:836px;top:365px;">最佳化</div><div class="t" style="left:806px;top:387px;">校刀位置</div><div class="sunk " style="left:887px;top:384px;width:72px;height:20px;font-size:12px;padding-left:4px">刀尖</div><div class="dd" style="left:941px;top:386px;height:16px"></div><div class="a" style="left:966px;top:375px;width:33px;height:33px;background:#c0c0c0;border:1px solid;border-color:#000 #fff #fff #000"></div><svg style="left:966px;top:375px" width="33" height="33" viewBox="0 0 33 33"><path d="M6 2v14a9 9 0 0 0 18 0V2" fill="none" stroke="#000" stroke-width="1.300"/><path d="M3 25h28" stroke="#e02020" stroke-width="1.300"/><circle cx="15" cy="25.500" r="2" fill="#00e0e0"/></svg><div class="t" style="left:806px;top:411px;">刀具在转角</div><div class="t" style="left:806px;top:424px;">处走圆角</div><div class="sunk " style="left:887px;top:416px;width:72px;height:20px;font-size:12px;padding-left:4px">全部开</div><div class="dd" style="left:941px;top:418px;height:16px"></div><div class="cb" style="left:806px;top:443px;background:#fff"><svg width="9" height="9" style="left:1px;top:1px" viewBox="0 0 9 9"><path d="M1 3.5 L3.5 6 L8 1.5" fill="none" stroke="#000" stroke-width="2"/></svg></div><div class="t" style="left:824px;top:443px;">寻找相交性</div><div class="t" style="left:806px;top:462px;">曲线打断成线段</div><div class="t" style="left:806px;top:475px;">的误差值</div><div class="sunk dis" style="left:899px;top:466px;width:60px;height:22px;font-size:12px">0.025</div><div class="t" style="left:806px;top:496px;"><span class="l">3D</span>曲线的最大</div><div class="t" style="left:806px;top:509px;">深度变化量</div><div class="sunk dis" style="left:899px;top:501px;width:60px;height:22px;font-size:12px">0.05</div><div class="t" style="left:819px;top:539px;"><span class="l">XY</span>方向预留量</div><div class="sunk y" style="left:899px;top:535px;width:60px;height:22px;font-size:12px">0.0</div><div class="t" style="left:824px;top:570px;"><span class="l">Z</span>方向预留</div><div class="hl" style="left:824px;top:583px;width:6px;background:#000"></div><div class="sunk y" style="left:899px;top:568px;width:60px;height:22px;font-size:12px">0.0</div><div class="btn " style="left:902px;top:755px;width:54px;height:28px;line-height:26px;"></div><svg style="left:919px;top:760px" width="20" height="18" viewBox="0 0 20 18"><path d="M2 10l5 7L18 1" stroke="#208020" stroke-width="4" fill="none"/><path d="M2 10l5 6L18 1" stroke="#50d040" stroke-width="2.200" fill="none"/></svg><div class="btn " style="left:960px;top:755px;width:54px;height:28px;line-height:26px;"></div><svg style="left:978px;top:760px" width="18" height="18" viewBox="0 0 18 18"><path d="M2 2l14 14M16 2L2 16" stroke="#c02010" stroke-width="5.500"/><path d="M2 2l14 14M16 2L2 16" stroke="#f04020" stroke-width="3.500"/></svg><div class="btn " style="left:1018px;top:755px;width:54px;height:28px;line-height:26px;"></div><div class="t" style="left:1039px;top:758px;font-size:20px;font-weight:bold;color:#9090a0;line-height:22px;text-shadow:1px 1px 0 #505060">?</div><div class="a" style="left:669px;top:557px;width:116px;height:29px;background:#ffffe1;border:1px solid #303030;border-radius:7px"></div><svg style="left:715px;top:545px" width="20" height="15" viewBox="0 0 20 15"><path d="M8 13.500 L12 2 L15.500 13.500" fill="#ffffe1" stroke="#000"/><path d="M8.500 14 h6.500" stroke="#ffffe1" stroke-width="2"/></svg><div class="t lat" style="left:682px;top:565px;letter-spacing:-.1px">-1.0E38 to +1.0E38</div><div class="a" style="left:620px;top:531px;width:174px;height:64px;border:2.5px solid #e030e0"></div><svg style="left:640px;top:590px" width="100" height="275" viewBox="0 0 100 275"><path d="M91 5 L6 269" stroke="#e030e0" stroke-width="2"/></svg><div class="a" style="left:549px;top:871px;width:523px;height:109px;background:#fff;"></div><div class="t" style="left:550px;top:871px;color:#e030e0;font-family:'Noto Serif CJK SC',serif;font-weight:600;font-size:26px;line-height:27px;letter-spacing:3px">在<span class="kl">64</span>位系统下<span class="kl">,MCAM&nbsp;X3</span>填写深度<span class="kl">″1-0.3″</span></div><div class="t" style="left:550px;top:898px;color:#e030e0;font-family:'Noto Serif CJK SC',serif;font-weight:600;font-size:26px;line-height:27px;letter-spacing:3px">都出现报警<span class="kl">,</span>如图</div><div class="t" style="left:550px;top:925px;color:#e030e0;font-family:'Noto Serif CJK SC',serif;font-weight:600;font-size:26px;line-height:27px;letter-spacing:3px">只能整数加减<span class="kl">,</span>不能出现小数是怎么回事<span class="kl">?</span></div></div><div class="t" style="left:1380px;top:1177px;font-size:17px;line-height:20px;font-weight:bold;color:#e82020;text-shadow:0 0 1px #fff,1px 1px 0 #fff,-1px -1px 0 #fff,1px -1px 0 #fff,-1px 1px 0 #fff">三维网<span style="font-size:15px;letter-spacing:2.1px">www.3dportal.cn</span></div></body></html>
